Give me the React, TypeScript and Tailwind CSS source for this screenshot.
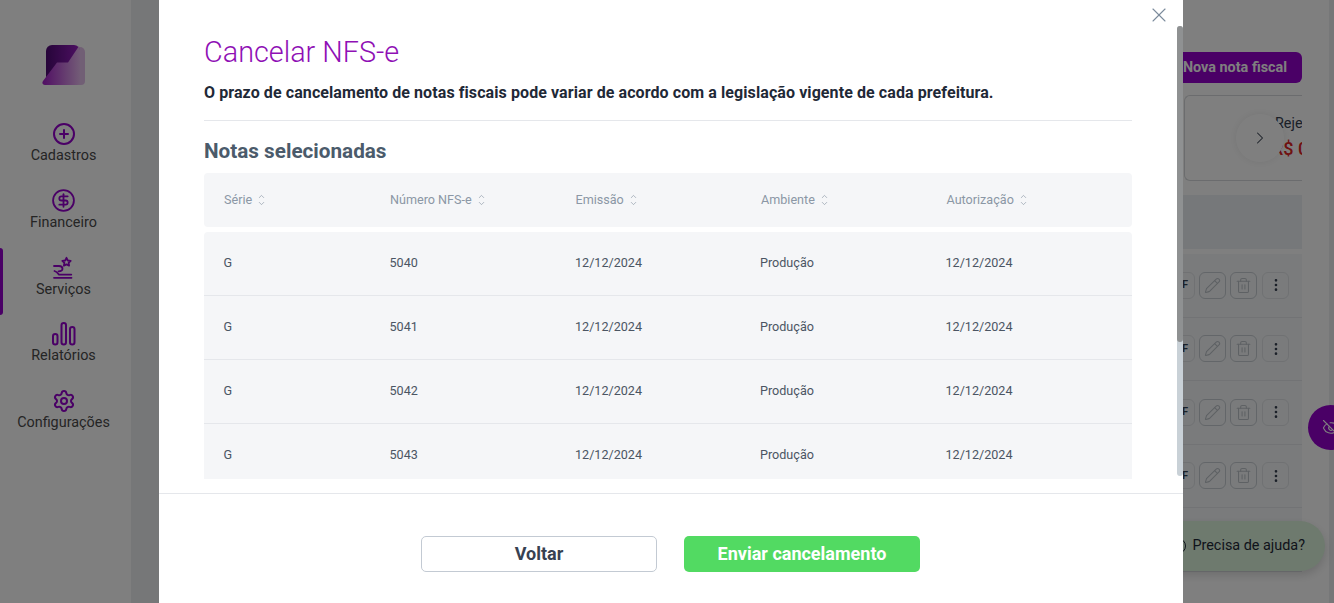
import React from 'react';
import { ChevronRight, ChevronUp, ChevronDown, CirclePlus, CircleDollarSign, EllipsisVertical, EyeOff, Pencil, Settings, Trash2, X } from 'lucide-react';

const notas = ['5040', '5041', '5042', '5043'];
const colunas = ['Série', 'Número NFS-e', 'Emissão', 'Ambiente', 'Autorização'];

const HandStarIcon = () => (
  <svg width="22" height="24" viewBox="0 0 22 24" fill="none" stroke="#9400cc" strokeWidth="1.800" strokeLinecap="round" strokeLinejoin="round">
    <path d="M13.500 1.800l1.300 2.700 2.900.4-2.100 2 .5 2.800-2.600-1.300-2.600 1.300.5-2.800-2.100-2 2.900-.4z" />
    <path d="M1 10h5c2.200 0 3.500 1.200 3.500 2.800S7.800 15.300 5.500 15.300" />
    <path d="M1.500 15c1.600.5 3 1.800 4.500 3.600h12.300" />
    <path d="M1 21.800h17.500" />
  </svg>
);

const BarsIcon = () => (
  <svg width="24" height="24" viewBox="0 0 24 24" fill="none" stroke="#9400cc" strokeWidth="2">
    <rect x="1" y="12" width="4.500" height="10.500" rx="2.250" />
    <rect x="9.500" y="1" width="4.500" height="21.500" rx="2.250" />
    <rect x="18" y="5" width="4.500" height="17.500" rx="2.250" />
  </svg>
);

const Logo = () => (
  <svg width="43" height="40" viewBox="0 0 43 40">
    <defs>
      <linearGradient id="logoTop" x1="0" y1="0" x2="1" y2="0">
        <stop offset="0" stopColor="#4d0a73" />
        <stop offset="1" stopColor="#9a1fc4" />
      </linearGradient>
      <linearGradient id="logoBottom" x1="0" y1="0" x2="1" y2="0">
        <stop offset="0" stopColor="#a21cc8" />
        <stop offset="1" stopColor="#e6b8ee" />
      </linearGradient>
    </defs>
    <path d="M37 2h1a5 5 0 0 1 5 5v29a4 4 0 0 1-4 4H10z" fill="#d9a8e4" opacity="0.75" />
    <rect x="4" y="0" width="34" height="37" rx="6" fill="url(#logoTop)" />
    <path d="M37 1L26 17.500H15L1 36c-1.300 2-.5 4 2 4h32a3 3 0 0 0 3-3V5z" fill="url(#logoBottom)" />
  </svg>
);

const NavItem = ({ icon, label }: { icon: React.ReactNode; label: string }) => (
  <div className="flex h-[66.7px] flex-col items-center">
    <div className="flex h-[24px] items-center justify-center">{icon}</div>
    <span className="text-[14.4px] leading-[20px] text-[#4a4a4a]">{label}</span>
  </div>
);

const Sidebar = () => (
  <aside className="relative flex w-[131px] shrink-0 flex-col items-center bg-white pr-[4px] pt-[45px]">
    <Logo />
    <nav className="mt-[37.2px] flex w-full flex-col">
      <NavItem icon={<CirclePlus size={24} color="#9400cc" strokeWidth={2} />} label="Cadastros" />
      <NavItem icon={<CircleDollarSign size={25} color="#9400cc" strokeWidth={1.750} />} label="Financeiro" />
      <NavItem icon={<HandStarIcon />} label="Serviços" />
      <NavItem icon={<BarsIcon />} label="Relatórios" />
      <NavItem icon={<Settings size={24} color="#9400cc" strokeWidth={2} />} label="Configurações" />
    </nav>
    <div className="absolute left-0 top-[248px] h-[67px] w-[3px] rounded-r-[3px] bg-[#9400cc]" />
  </aside>
);

const RowActions = () => (
  <div className="flex h-[63.500px] items-center justify-end gap-[4px] border-b border-[#e5e7eb] pr-[13px]">
    <div className="flex h-[27px] w-[34px] shrink-0 items-center justify-end rounded-[6px] border border-[#e0e3e6] pr-[6px] text-[11px] font-bold text-[#374151]">PDF</div>
    <div className="flex h-[27px] w-[27px] shrink-0 items-center justify-center rounded-[6px] border border-[#c6ccd2] text-[#bcc2c8]"><Pencil size={17} strokeWidth={1.5} /></div>
    <div className="flex h-[27px] w-[27px] shrink-0 items-center justify-center rounded-[6px] border border-[#c6ccd2] text-[#bcc2c8]"><Trash2 size={17} strokeWidth={1.5} /></div>
    <div className="ml-[1px] flex h-[27px] w-[27px] shrink-0 items-center justify-center rounded-[6px] border border-[#e0e3e6] text-[#374151]"><EllipsisVertical size={16} strokeWidth={2} /></div>
  </div>
);

const Background = () => (
  <main className="min-w-0 flex-1 bg-[#eceef0] pl-[28px] pr-[5px]">
    <div className="flex h-full flex-col items-end bg-white pr-[27px] pt-[52px]">
      <button className="h-[31px] w-[134px] rounded-[6px] bg-[#9400cc] text-[14.400px] font-bold text-white">Nova nota fiscal</button>
      <div className="relative mt-[12px] h-[86px] w-[118px] rounded-l-[6px] border-y border-l border-[#d6d9dc] pl-[87px] pt-[18px]">
        <div className="w-[30px] overflow-hidden whitespace-nowrap pl-[3px] text-[14.400px] leading-[20px] text-[#374151]">Rejeitadas</div>
        <div className="mt-[2px] w-[30px] overflow-hidden whitespace-nowrap text-[18px] font-medium leading-[26px] text-[#e02424]">R$ 0,00</div>
        <div className="absolute left-[51px] top-[18px] flex h-[48px] w-[48px] items-center justify-center rounded-full bg-white text-[#374151] shadow-[0_0_8px_rgba(0,0,0,0.08)]">
          <ChevronRight size={20} strokeWidth={1.25} />
        </div>
      </div>
      <div className="mt-[14px] h-[54px] w-[120px] bg-[#edf0f4]" />
      <div className="mt-[5px] h-[318px] w-[120px] overflow-hidden bg-[#f5f7f9]">
        <RowActions />
        <RowActions />
        <RowActions />
        <RowActions />
        <RowActions />
      </div>
    </div>
  </main>
);

const SortIcon = () => (
  <span className="ml-[5px] inline-flex flex-col text-[#8b97a5]">
    <ChevronUp size={9} strokeWidth={1.750} className="-mb-[1px]" />
    <ChevronDown size={9} strokeWidth={1.750} className="-mt-[1px]" />
  </span>
);

const CancelModal = () => (
  <div className="absolute inset-0 flex justify-center bg-black/50 pl-[8px]">
    <div className="relative flex h-full w-[1024px] flex-col bg-white">
      <button className="absolute right-[12px] top-[3px] text-[#7b8b9c]"><X size={24} strokeWidth={1.100} /></button>

      <div className="min-h-0 flex-1 overflow-hidden px-[45px] pr-[51px] pt-[32px]">
        <h2 className="text-[28.800px] font-light leading-[40px] text-[#8f10b5]">Cancelar NFS-e</h2>
        <p className="mt-[9px] whitespace-nowrap text-[16px] font-bold leading-[24px] tracking-[0.085px] text-[#1f2937]">O prazo de cancelamento de notas fiscais pode variar de acordo com a legislação vigente de cada prefeitura.</p>
        <div className="mt-[15px] border-t border-[#e5e7eb]" />
        <h3 className="mt-[16px] text-[20.700px] font-bold leading-[28px] text-[#4b5b6b]">Notas selecionadas</h3>
        <div className="mt-[8px] grid h-[54px] grid-cols-[166px_185.5px_185.5px_185.5px_1fr] items-center rounded-[4px] bg-[#f5f6f8]">
          {colunas.map((coluna) => (
            <div key={coluna} className="flex items-center pl-[20px] text-[12.600px] text-[#8b97a5]">
              {coluna}
              <SortIcon />
            </div>
          ))}
        </div>
        <div className="mt-[5px] rounded-[4px] bg-[#f5f6f8]">
          {notas.map((numero) => (
            <div key={numero} className="grid h-[64px] grid-cols-[166px_185.5px_185.5px_185.5px_1fr] items-center border-b border-[#e5e7eb] pb-[1px] text-[12.600px] text-[#4b5563]">
              <span className="pl-[19.500px]">G</span>
              <span className="pl-[19.500px]">{numero}</span>
              <span className="pl-[19.500px]">12/12/2024</span>
              <span className="pl-[19px]">Produção</span>
              <span className="pl-[19px]">12/12/2024</span>
            </div>
          ))}
        </div>
      </div>

      {/* scrollbar do corpo do modal */}
      <div className="absolute right-0 top-[26px] h-[450px] w-[6px] rounded-[3px] bg-[#c9d1d7]">
        <div className="h-[316px] w-full rounded-[3px] bg-[#8f9192]" />
      </div>

      <div className="mt-[14px] flex h-[110px] shrink-0 justify-center gap-[27px] border-t border-[#e5e7eb] pr-[2px] pt-[42px]">
        <button className="h-[36px] w-[236px] rounded-[5px] border border-[#c3cad3] bg-white pb-[2px] pl-[1px] text-[18px] font-bold text-[#374151]">Voltar</button>
        <button className="h-[36px] w-[236px] rounded-[5px] bg-[#52da62] pb-[2px] pl-[1px] text-[18px] font-bold text-white">Enviar cancelamento</button>
      </div>
    </div>
  </div>
);

export default function App() {
  return (
    <div className="relative flex h-[603px] w-[1334px] overflow-hidden font-['Roboto',sans-serif]">
      <Sidebar />
      <Background />
      <div className="absolute left-[1150px] top-[521px] flex h-[50px] w-[175px] items-center justify-end rounded-full bg-[#dcf4dc] pr-[20px] text-[14.400px] text-[#1f2937] shadow-[0_4px_10px_rgba(0,0,0,0.15)]">
        <span className="mr-[6px] h-[16px] w-[16px] rounded-full border border-[#1f2937]" />
        Precisa de ajuda?
      </div>
      <div className="absolute left-[1308px] top-[405px] flex h-[45px] w-[45px] items-center rounded-full bg-[#9400cc] pl-[14px] text-white">
        <EyeOff size={18} strokeWidth={1.500} />
      </div>
      <CancelModal />
    </div>
  );
}
